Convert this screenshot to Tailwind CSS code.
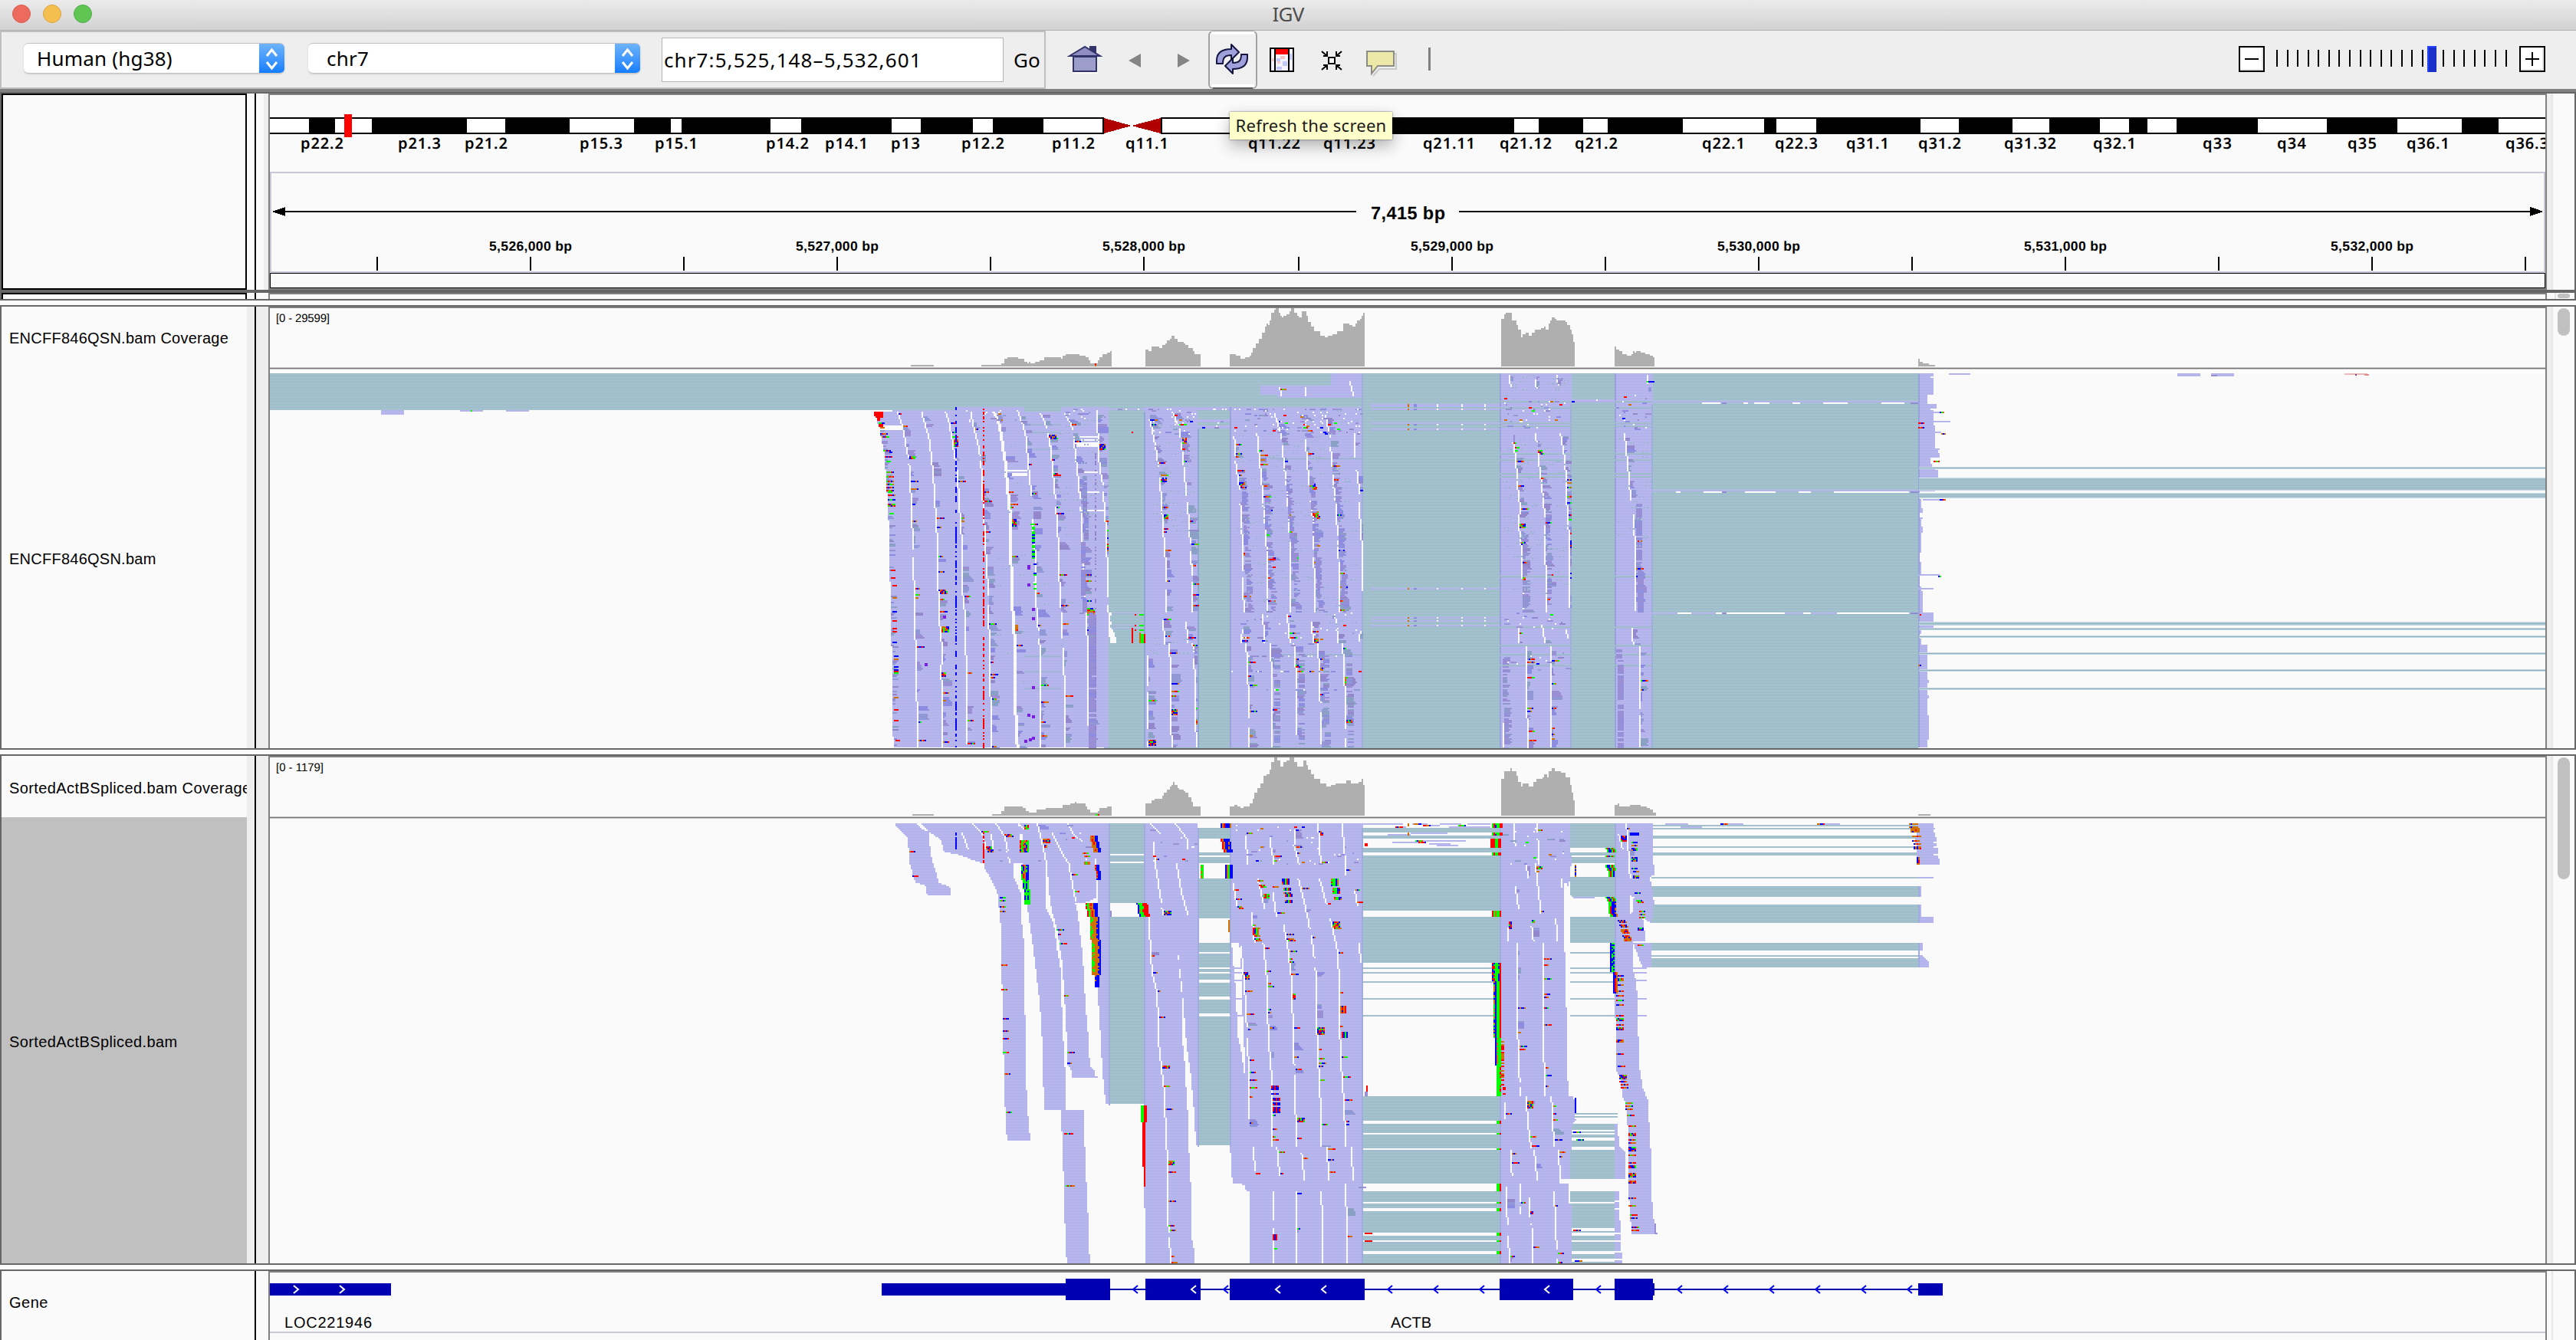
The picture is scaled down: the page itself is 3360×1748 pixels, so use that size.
<!DOCTYPE html>
<html lang="en">
<head>
<meta charset="utf-8">
<title>IGV</title>
<script src="https://cdn.jsdelivr.net/npm/@tailwindcss/browser@4"></script>
</head>
<body class="w-[3360px] h-[1748px] overflow-hidden bg-[#fafafa] flex flex-col text-black font-['Liberation_Sans',sans-serif]">

<!-- Title bar -->
<header class="h-10 shrink-0 flex items-center relative bg-linear-to-b from-[#ebebeb] to-[#d2d2d2] border-b border-[#b0b0b0]">
  <div class="flex gap-4 pl-4 -mt-1">
    <span class="size-6 rounded-full bg-[#ed6a5e] border border-[#d8574c]"></span>
    <span class="size-6 rounded-full bg-[#f5bf4f] border border-[#dba53b]"></span>
    <span class="size-6 rounded-full bg-[#61c554] border border-[#4cab40]"></span>
  </div>
  <h1 class="absolute inset-x-0 top-0 text-center text-[26px] leading-[37px] tracking-[-0.8px] text-[#4d4d4d] font-['Noto_Sans',sans-serif]">IGV</h1>
</header>

<!-- Toolbar -->
<nav class="h-[76px] shrink-0 flex bg-[#eeeeee] font-['Noto_Sans',sans-serif] text-[26px]">
  <div class="w-[1364px] h-[76px] border-2 border-[#bfbfbf] flex items-start">
    <div class="ml-[29px] mt-[14px] w-[340px] h-10 flex rounded-md overflow-hidden bg-white border-y border-[#c0c0c0] shadow-sm">
      <span class="flex-1 pl-[17px] leading-[38px] tracking-[0.2px]">Human (hg38)</span>
      <svg class="w-[33px] h-10 bg-linear-to-b from-[#6cb3fa] to-[#057aff]" viewBox="0 0 33 40" fill="none" stroke="#fff" stroke-width="3"><path d="M10 16l6.5-8 6.5 8M10 24l6.5 8 6.5-8"/></svg>
    </div>
    <div class="ml-[31px] mt-[14px] w-[433px] h-10 flex rounded-md overflow-hidden bg-white border-y border-[#c0c0c0] shadow-sm">
      <span class="flex-1 pl-6 leading-[38px] tracking-[0.2px]">chr7</span>
      <svg class="w-[33px] h-10 bg-linear-to-b from-[#6cb3fa] to-[#057aff]" viewBox="0 0 33 40" fill="none" stroke="#fff" stroke-width="3"><path d="M10 16l6.5-8 6.5 8M10 24l6.5 8 6.5-8"/></svg>
    </div>
    <div class="ml-7 mt-[7px] w-[446px] h-[58px] bg-white border border-[#b5b5b5] pl-0.5 leading-[56px] tracking-[1.1px] whitespace-nowrap">chr7:5,525,148–5,532,601</div>
    <span class="ml-[13px] leading-[72px]">Go</span>
  </div>
  <svg class="w-[520px] h-[76px]" viewBox="1364 40 520 76">
    <!-- home -->
    <g stroke="#33336b" stroke-width="2">
      <path d="M1422 66v-5h7v12" fill="#33336b"/>
      <path d="M1395 73l20-12 20 12z" fill="#8f8fc4"/>
      <rect x="1400" y="74" width="30" height="19" fill="#9d9dcc"/>
    </g>
    <path d="M1400 95h32" stroke="#fff" stroke-width="2"/>
    <path d="M1488 70v18l-16-9zM1536 70v18l16-9z" fill="#858585"/>
    <!-- refresh -->
    <rect x="1577" y="41" width="62" height="74" rx="5" fill="#f0f0f0" stroke="#a3a3a3" stroke-width="2"/>
    <path d="M1580 43h56M1580 112h56" stroke="#fdfdfd" stroke-width="4"/>
    <path d="M1582 115h52" stroke="#5a5a5a" stroke-width="2"/>
    <g fill="#a0a0dc" stroke="#15153f" stroke-width="2" stroke-linejoin="round">
      <path id="arc" d="M1587 83v-4c0-10 7-15 19-15v-6l10 10-10 10v-6c-8 0-11 3-11 11z"/>
      <use href="#arc" transform="rotate(180 1607 77)"/>
    </g>
    <!-- region of interest -->
    <rect x="1657" y="63" width="30" height="30" fill="#f3f3ff" stroke="#000" stroke-width="2"/>
    <rect x="1663" y="64" width="18" height="7" fill="#f00"/>
    <path d="M1659 76h4v4h-4zM1670 73h6v4h-6zM1666 80h4v3h-4z" fill="#f6c8c8"/>
    <path d="M1665 76h5v4h-5zM1673 80h6v6h-6zM1665 87h7v4h-7zM1682 70h3v8h-3z" fill="#c2c8fa"/>
    <path d="M1663 63v30M1681 63v30" stroke="#000" stroke-width="2"/>
    <!-- fit to window -->
    <g stroke="#000" stroke-width="2" fill="none">
      <rect x="1733" y="75" width="8" height="8" fill="#fff"/>
      <path d="M1724 67l7 6M1750 67l-7 6M1724 91l7-6M1750 91l-7-6M1731 67v6h-5M1743 67v6h5M1731 91v-6h-5M1743 91v-6h5"/>
    </g>
    <path d="M1786 70h35v20h-22l-8 9" fill="none" stroke="#c9c9c9" stroke-width="2"/>
    <path d="M1783 67h35v19h-21l-8 10v-10h-6z" fill="#ece8a8" stroke="#8c8c86" stroke-width="2"/>
    <path d="M1863 62h3v30h-3z" fill="#808080"/>
  </svg>
  <div class="flex-1"></div>
  <svg id="zoomer" class="w-[460px] h-[76px]" viewBox="2900 40 460 76" shape-rendering="crispEdges"></svg>
</nav>
<div class="h-1 shrink-0 bg-[#808080]"></div>
<div class="h-0.5 shrink-0 bg-[#666666]"></div>

<!-- Header panel -->
<section class="h-64 shrink-0 flex border-r-2 border-[#666666]">
  <div class="w-0.5 bg-[#666666]"></div>
  <div class="w-80 border-x-2 border-y-2 border-black"></div>
  <div class="w-2.5"></div><div class="w-0.5 bg-black"></div><div class="w-2.5"></div><div class="w-1.5 bg-[#eeeeee]"></div>
  <svg id="header" class="w-[2972px] h-64" viewBox="350 122 2972 256" shape-rendering="crispEdges"></svg>
  <div class="w-1.5 bg-[#eeeeee]"></div><div class="w-0.5 bg-[#e6e6e6]"></div>
</section>
<div class="h-1 shrink-0 bg-[#666666]"></div>
<section class="h-2 shrink-0 flex border-r-2 border-[#666666]">
  <div class="w-0.5 bg-[#666666]"></div>
  <div class="w-80 border-x-2 border-t-2 border-black"></div>
  <div class="w-2.5"></div><div class="w-0.5 bg-black"></div><div class="w-4"></div>
  <div class="w-[2972px] border-x-2 border-t-2 border-[#808080]"></div>
  <div class="w-3 border-r-2 border-[#e6e6e6]"></div><div class="ml-0.5 mt-px w-4 h-1.5 rounded-full bg-[#c1c1c1]"></div>
</section>
<div class="h-2.5 shrink-0 border-y-2 border-[#666666]"></div>

<!-- Alignment panel 1 -->
<section class="h-[576px] shrink-0 flex border-r-2 border-[#666666]">
  <div class="w-0.5 bg-[#666666]"></div>
  <div class="w-80 overflow-hidden pl-[10px] text-[20px] tracking-[0.25px] whitespace-nowrap">
    <div class="h-[82px] leading-[83px]">ENCFF846QSN.bam Coverage</div>
    <div class="h-[494px] leading-[495px]">ENCFF846QSN.bam</div>
  </div>
  <div class="w-2.5 bg-[#eeeeee]"></div><div class="w-0.5 bg-black"></div><div class="w-4 bg-[#eeeeee]"></div>
  <svg id="track1" class="w-[2972px] h-[576px]" viewBox="350 400 2972 576" shape-rendering="crispEdges"></svg>
  <div class="w-1.5 bg-[#eeeeee]"></div><div class="w-0.5 bg-[#e6e6e6]"></div>
  <div class="ml-1.5 mt-0.5 w-4 h-9 rounded-full bg-[#c1c1c1]"></div>
</section>
<div class="h-2.5 shrink-0 border-y-2 border-[#666666]"></div>

<!-- Alignment panel 2 -->
<section class="h-[662px] shrink-0 flex border-r-2 border-[#666666]">
  <div class="w-0.5 bg-[#666666]"></div>
  <div class="w-80 overflow-hidden text-[20px] tracking-[0.4px] whitespace-nowrap">
    <div class="h-20 leading-[84px] pl-[10px]">SortedActBSpliced.bam Coverage</div>
    <div class="h-[582px] leading-[587px] pl-[10px] bg-[#c0c0c0]">SortedActBSpliced.bam</div>
  </div>
  <div class="w-2.5 bg-[#eeeeee]"></div><div class="w-0.5 bg-black"></div><div class="w-4 bg-[#eeeeee]"></div>
  <svg id="track2" class="w-[2972px] h-[662px]" viewBox="350 986 2972 662" shape-rendering="crispEdges"></svg>
  <div class="w-1.5 bg-[#eeeeee]"></div><div class="w-0.5 bg-[#e6e6e6]"></div>
  <div class="ml-1.5 mt-0.5 w-4 h-[159px] rounded-full bg-[#c1c1c1]"></div>
</section>
<div class="h-2.5 shrink-0 border-y-2 border-[#666666]"></div>

<!-- Gene panel -->
<section class="h-[90px] shrink-0 flex border-r-2 border-[#666666]">
  <div class="w-0.5 bg-[#666666]"></div>
  <div class="w-[330px] pl-[10px] text-[20px] leading-[83px] tracking-[0.5px]">Gene</div>
  <div class="w-0.5 bg-black"></div><div class="w-4"></div>
  <svg id="genes" class="w-[2972px] h-[90px]" viewBox="350 1658 2972 90" shape-rendering="crispEdges"></svg>
  <div class="w-2 border-r-2 border-[#e6e6e6]"></div>
</section>

<!-- Tooltip -->
<div class="absolute left-[1604px] top-[146px] w-[212px] h-9 bg-[#ffffcc] text-center text-[22px] leading-[35px] tracking-[0.25px] whitespace-nowrap text-[#1a1a1a] font-['Noto_Sans',sans-serif] shadow-[0_8px_20px_rgba(0,0,0,0.3),0_0_2px_rgba(0,0,0,0.6)]">Refresh the screen</div>

<script>
const NS = 'http://www.w3.org/2000/svg';
const $ = id => document.getElementById(id);
function el(parent, name, attrs, text) {
  const e = document.createElementNS(NS, name);
  for (const k in attrs) e.setAttribute(k, attrs[k]);
  if (text) e.textContent = text;
  parent.appendChild(e);
  return e;
}
const box = (p, c, x, y, w, h) => el(p, 'rect', {x, y, width: w, height: h, fill: c});
const label = (p, s, x, y, len, size, font, weight = 400) =>
  el(p, 'text', {x, y, textLength: len, 'font-size': size, 'font-family': font, 'font-weight': weight, 'text-rendering': 'geometricPrecision'}, s);
const frame = (p, y, h) => {
  box(p, '#808080', 350, y, 2, h); box(p, '#808080', 3320, y, 2, h); box(p, '#808080', 350, y, 2972, 2);
};
let seed = 7;
const rnd = () => (seed = (seed * 1664525 + 1013904223) >>> 0) / 4294967296;
const pick = a => a[Math.floor(rnd() * a.length)];

/* zoom control */
const z = $('zoomer');
for (const x of [2920, 3286]) {
  box(z, '#000', x, 60, 34, 34); box(z, '#e4e4e4', x + 2, 62, 30, 30); box(z, '#fff', x + 2, 62, 28, 28);
  box(z, '#000', x + 8, 76, 18, 2);
}
box(z, '#000', 3302, 68, 2, 18);
for (let i = 0; i < 23; i++) box(z, '#000', Math.round(2969 + i * 13.57), 65, 2, 22);
box(z, '#2244ff', 3166, 60, 12, 34); box(z, '#1a30c8', 3168, 62, 10, 32);

/* ideogram and ruler */
const h = $('header');
frame(h, 122, 256);
box(h, '#000', 352, 153, 1088, 22); box(h, '#000', 1514, 153, 1806, 22);
const white = [[352,403],[437,485],[609,659],[743,827],[875,889],[1005,1045],[1163,1201],[1269,1295],[1361,1438],[1516,1700],[1975,2007],[2065,2097],[2195,2301],[2317,2369],[2505,2555],[2625,2673],[2739,2777],[2801,2839],[2945,3035],[3127,3211],[3259,3320]];
for (const [a, b] of white) box(h, '#fff', a, 155, b - a, 18);
el(h, 'path', {d: 'M1440 154L1476 164L1440 174zM1514 154L1476 164L1514 174z', fill: '#b00000'});
box(h, '#f00', 449, 149, 10, 30);
const bands = {392:'p22.2',519:'p21.3',606:'p21.2',756:'p15.3',854:'p15.1',999:'p14.2',1076:'p14.1',1162:'p13',1254:'p12.2',1372:'p11.2',1468:'q11.1',1628:'q11.22',1726:'q11.23',1856:'q21.11',1956:'q21.12',2054:'q21.2',2220:'q22.1',2315:'q22.3',2408:'q31.1',2502:'q31.2',2614:'q31.32',2730:'q32.1',2873:'q33',2970:'q34',3062:'q35',3139:'q36.1',3268:'q36.3'};
for (const x in bands) label(h, bands[x], x, 194, {3: 38, 5: 56, 6: 68}[bands[x].length], 20, 'Noto Sans, sans-serif', 600);
for (const r of [[352,224,2968,2],[352,224,2,132],[3318,224,2,132],[352,354,2968,2]]) box(h, '#c8c8d6', ...r);
box(h, '#000', 352, 356, 2968, 20); box(h, '#fafafa', 353, 357, 2966, 18); box(h, '#808080', 352, 376, 2968, 2);
box(h, '#000', 360, 275, 1409, 2); box(h, '#000', 1903, 275, 1409, 2);
el(h, 'path', {d: 'M354 276L372 270V282zM3318 276L3300 270V282z'});
label(h, '7,415 bp', 1788, 286, 97, 23.5, 'Liberation Sans, sans-serif', 700);
[491,691,891,1091,1291,1491,1693,1893,2093,2293,2493,2693,2893,3093,3293].forEach((x, i) => {
  box(h, '#000', x, 335, 2, 18);
  if (i % 2) label(h, '5,' + (526 + (i - 1) / 2) + ',000 bp', x - 53, 327, 108, 17.5, 'Liberation Sans, sans-serif', 700);
});
box(h, '#fafafa', 3322, 178, 2, 20);
box(h, '#808080', 3320, 122, 2, 256);

/* drawing surface for a track: coordinates are mapped through the current view */
function surface(svg) {
  const ops = [];
  let v;
  const X = x => Math.round((v.x + x / v.sx) / 2) * 2, Y = y => Math.round((v.y + y / v.sy - v.o) / 2) * 2 + v.o;
  const s = {
    limit: 9999,
    view(x, y, sx, sy, o) { v = {x, y, sx, sy, o}; },
    raw(c, x, y, w, hh) {
      w = Math.min(w, s.limit - x);
      if (w <= 0) return;
      const last = ops[ops.length - 1], d = `M${x} ${y}h${w}v${hh}h${-w}z`;
      if (last && last[0] === c) last[1].push(d); else ops.push([c, [d]]);
    },
    X, Y,
    rect(c, x0, y0, x1, y1) { s.raw(c, X(x0), Y(y0), Math.max(2, X(x1) - X(x0)), Math.max(2, Y(y1) - Y(y0))); },
    poly(c, ...n) {
      const p = [];
      for (let i = 0; i < n.length; i += 2) p.push([v.x + n[i] / v.sx, v.y + n[i + 1] / v.sy]);
      const ys = p.map(q => q[1]);
      for (let y = Math.floor((Math.min(...ys) - v.o) / 2) * 2 + v.o; y < Math.max(...ys); y += 2) {
        const c0 = [];
        p.forEach((a, i) => {
          const b = p[(i + 1) % p.length], m = y + 1.01;
          if ((a[1] > m) !== (b[1] > m)) c0.push(a[0] + (m - a[1]) / (b[1] - a[1]) * (b[0] - a[0]));
        });
        c0.sort((a, b) => a - b);
        for (let i = 0; i + 1 < c0.length; i += 2) {
          const a = Math.round(c0[i] / 2) * 2, b = Math.round(c0[i + 1] / 2) * 2;
          if (b > a) s.raw(c, a, y, b - a, 2);
        }
      }
    },
    line(n, fn) {
      for (let i = 0; i + 3 < n.length; i += 2) {
        const y0 = v.y + n[i + 1] / v.sy, y1 = v.y + n[i + 3] / v.sy, x0 = v.x + n[i] / v.sx, x1 = v.x + n[i + 2] / v.sx;
        for (let y = Math.round((y0 - v.o) / 2) * 2 + v.o; y < y1; y += 2)
          fn(Math.round((x0 + (y - y0) / (y1 - y0) * (x1 - x0)) / 2) * 2, y);
      }
    },
    steps(c, base, ...n) {
      const b = Math.round(v.y + base / v.sy);
      for (let i = 0; i + 2 < n.length; i += 2) {
        const a = X(n[i]), e = X(n[i + 2]), t = Math.round((v.y + n[i + 1] / v.sy) / 2) * 2;
        if (e > a) s.raw(c, a, t, e - a, b - t);
      }
    },
    flush() { for (const [c, d] of ops) el(svg, 'path', {d: d.join(''), fill: c}); ops.length = 0; }
  };
  return s;
}
function patterns(svg, id, y0) {
  const defs = el(svg, 'defs', {});
  for (const [n, a, b] of [['read', '#b0b0e9', '#babaf0'], ['skip', '#98b7c5', '#abc8d4']]) {
    const p = el(defs, 'pattern', {id: n + id, width: 8, height: 2, patternUnits: 'userSpaceOnUse', y: y0});
    box(p, a, 0, 0, 8, 1); box(p, b, 0, 1, 8, 1);
  }
}
const BASES = ['#ff0000', '#0000ff', '#00ff00', '#d17105', '#d17105', '#0000ff', '#ff0000'];
const DIM = ['#8c8ce0', '#9a8fd4', '#9098d6', '#9488cc', '#8aa0c4'];
const GRAY = '#afafaf';

/* white gap between neighbouring reads with mismatch clusters trailing it */
function gap(s, n, o = {}) {
  const {w = 2, mis = 0.16, dim = 0.4, solid = 0.85, grow = 0} = o;
  let run = 0, cols = 0, open = true, count = 0, dimRun = 0, dw = 0, dc, total = 0;
  s.line(n, (x, y) => {
    total++;
    if (count-- <= 0) { open = rnd() < solid; count = open ? 4 + rnd() * 16 : 1 + rnd() * 4; }
    if (open) s.raw('#fafafa', x, y, w, 2);
    if (dimRun-- > 0) { if (rnd() < .4) dw = Math.max(2, dw + pick([-2, 2])); s.raw(dc, x + w, y, dw, 2); if (rnd() < .3) dc = pick(DIM); }
    else if (rnd() < dim * .35) { dimRun = 1 + rnd() * (5 + grow * total / 12); dw = 4 + Math.floor(rnd() * 4) * 2; dc = pick(DIM); }
    if (run-- > 0) { for (let k = 0; k < cols; k++) s.raw(pick(BASES), x + w + k * 2, y, 2, 2); }
    else if (rnd() < mis * .4) { run = rnd() < .85 ? 1 : 1 + rnd() * 4; cols = 2 + Math.floor(rnd() * 4); }
  });
}
function dots(s, x0, y0, x1, y1, n) {
  for (let i = 0; i < n; i++) {
    const x = s.X(x0 + rnd() * (x1 - x0)), y = s.Y(y0 + rnd() * (y1 - y0)), r = rnd();
    if (r < .45) s.raw('#fafafa', x, y, 2, 2);
    else if (r < .55) s.raw(pick(BASES), x, y, 4, 2);
    else s.raw(pick(DIM), x, y, 2 + Math.floor(rnd() * 4) * 2, 2);
  }
}
function specks(s, x0, y0, x1, y1, n) {
  for (let i = 0; i < n; i++) {
    const x = s.X(x0 + rnd() * (x1 - x0)), y = s.Y(y0 + rnd() * (y1 - y0));
    s.raw('#9fb6d2', x, y, 2, 2); s.raw('#9fb6d2', x + 4, y, 2, 2);
  }
}

/* ---------- track 1 ---------- */
{
  const svg = $('track1'), s = surface(svg), READ = 'url(#read1)', SKIP = 'url(#skip1)';
  patterns(svg, 1, 487);
  frame(svg, 400, 576);
  const L = () => s.view(1120, 380, 2.24, 2.529, 1), Rt = () => s.view(1820, 380, 2.063, 2.529, 1);
  L();
  s.steps(GRAY, 248, 152,243,220,0); s.steps(GRAY, 248, 358,243,418,237,425,225,435,217,465,222,485,232,493,238,498,233,503,238,515,233,527,228,543,218,590,222,597,210,605,207,645,212,665,218,670,228,677,238,700,228,705,218,712,207,727,202,735,197,739,0);
  s.steps(GRAY, 248, 838,193,848,196,857,183,880,187,887,177,895,170,900,162,910,158,914,147,923,157,932,165,948,170,955,177,964,187,975,197,983,207,999,0);
  s.steps(GRAY, 248, 1084,207,1100,212,1117,222,1127,217,1144,212,1148,202,1153,187,1161,170,1170,155,1178,138,1187,115,1192,107,1197,110,1201,97,1205,70,1213,60,1219,57,1228,70,1232,82,1237,87,1243,80,1250,75,1258,67,1263,57,1271,70,1280,80,1287,85,1296,66,1308,80,1313,100,1321,117,1330,132,1340,134,1347,147,1362,152,1370,145,1383,140,1398,130,1410,130,1416,107,1426,107,1433,112,1444,116,1450,107,1456,95,1463,90,1468,80,1473,72,1478,0);
  Rt();
  s.steps(GRAY, 248, 285,92,293,76,298,71,314,95,325,110,330,127,337,152,343,142,352,137,360,147,367,137,376,127,393,120,399,116,404,126,413,107,417,97,422,86,428,92,433,97,458,102,462,112,470,127,475,142,479,167,483,0);
  s.steps(GRAY, 248, 590,182,594,192,603,197,611,207,623,212,635,207,640,198,644,203,648,197,660,202,673,207,685,212,693,217,697,0);
  s.steps(GRAY, 248, 1408,223,1412,234,1420,238,1436,243,1452,0);
  s.raw('#ff0000', 1428, 474, 2, 2); s.raw('#d17105', 1428, 476, 2, 2);
  s.raw('#c4c4c4', 352, 479, 2968, 3); s.raw('#757575', 352, 480, 2968, 1);
  s.raw('#fdfdfd', 352, 482, 2968, 5);

  s.raw(SKIP, 352, 487, 1100, 48); s.raw(SKIP, 1440, 487, 1062, 489);
  s.raw(READ, 497, 535, 30, 6); s.raw(READ, 600, 535, 30, 2); s.raw(READ, 660, 535, 30, 2);
  s.raw('#00ff00', 614, 535, 2, 2);
  L();
  s.poly(READ, 45,395,283,393,283,383,730,383,732,1507,102,1507,98,1380,97,1220,94,1000,90,920,88,770,85,700,75,530,60,450);
  s.rect(SKIP, 485, 383, 592, 398);
  s.rect(READ, 835, 383, 992, 1507); s.rect(READ, 1085, 383, 1472, 1507);
  s.rect(READ, 992, 383, 1085, 392); s.rect(READ, 730, 385, 835, 390);
  s.rect(READ, 1378, 271, 1468, 352); s.rect(READ, 1175, 312, 1380, 343); s.rect(READ, 1225, 340, 1468, 352);
  s.rect(READ, 992, 420, 1085, 432); s.rect(READ, 992, 443, 1085, 453);
  s.rect('#8fa8cf', 833, 395, 836, 1507); s.rect('#8fa8cf', 990, 455, 993, 1507); s.rect('#9aa2dc', 1084, 383, 1087, 1507); s.rect('#9fb0d8', 1470, 271, 1473, 1507);
  for (const y of [435,465,516,1199,1250,1310]) s.rect('#9fb6d2', 485, y, 592, y + 3);
  for (const y of [551,1195]) s.rect('#9fb6d2', 1200, y, 1470, y + 3);
  for (const r of [[60,444,127,458],[625,478,697,484],[632,488,697,492],[628,500,697,513],[425,590,494,593],[430,597,494,610],[636,592,698,596],[640,661,705,666],[648,722,716,727]]) s.rect('#fafafa', ...r);
  s.poly('#fafafa', 730,1060,738,1062,734,1085,742,1100,734,1104,742,1115,748,1130,755,1160,733,1160);
  const g = [
    [112,395,125,440,135,500,145,560,150,660,154,770,158,850,158,940,163,1000,163,1120,165,1225,167,1300,169,1400,171,1507],
    [181,395,190,430,203,480,212,560,218,640,224,760,229,840,229,970,235,1020,235,1100,241,1170,239,1260,243,1380,244,1507],
    [252,395,262,430,270,480,280,550,287,610,293,720,298,800,300,920,303,1020,310,1070,311,1180,314,1320,314,1490],
    [325,395,335,450,346,500,355,560,360,660,362,740,368,800,370,880,375,960,376,1050,380,1150,381,1300,387,1400,387,1507],
    [390,395,405,430,414,490,424,560,430,640,437,720,438,790,441,900,445,960,446,1080,452,1150,454,1380,460,1507],
    [462,390,478,440,487,480,492,550,498,620,504,680,507,780,514,860,513,960,519,1070,527,1170,529,1280,529,1500],
    [530,400,548,450,558,510,566,600,572,680,578,770,583,860,584,940,588,1030,592,1110,596,1200,600,1320,602,1500],
    [600,400,620,440,628,500,638,600,645,680,650,770,653,880,656,980,663,1080,668,1200,666,1350,673,1500],
    [695,390,697,480,702,580,712,640,716,720,722,800,724,900,728,1055]];
  s.line([50,400,60,450,75,530,85,700,88,770,90,920,94,1000,97,1220,98,1380,102,1500], (x, y) => {
    if (rnd() < .3 && y < 660) for (let k = 0; k < 5; k++) s.raw(pick(BASES), x + k * 2, y, 2, 2);
    else if (rnd() < .1) s.raw(pick(BASES), x + 2, y, 6, 2);
    else if (rnd() < .35) s.raw(pick(DIM), x, y, 4 + Math.floor(rnd() * 3) * 2, 2);
  });
  s.poly('#ff0000', 45,395,72,395,72,414,62,418,64,425,56,425,52,416,45,414);
  s.poly('#00ff00', 56,430,68,430,68,436,58,436); s.poly('#ff0000', 58,436,72,436,72,446,60,446);
  g.forEach((n, i) => { s.limit = i === 8 ? 1446 : 9999; gap(s, n, i < 3 ? {dim: .22, mis: .12, solid: .97} : i === 4 ? {w: 4, dim: .45, mis: .1, solid: .97} : {dim: i > 6 ? .8 : .5, mis: .14}); });
  s.limit = 9999;
  s.line([660,820,661,1060,680,1061,680,1507], (x, y) => { if (rnd() < .9) s.raw(pick(['#9a8fd4','#9a8fd4','#9590d4','#8c8ce0']), x - 4, y, y > 800 ? 10 : 6, 2); });
  s.line([648,610,655,820], (x, y) => { if (rnd() < .8) s.raw(pick(DIM), x + 2, y, 6, 2); });
  for (const [x, c, p, y0] of [[280,'#0000ff',.55,383],[365,'#ff0000',.55,388],[692,'#9484cf',.4,520]])
    s.line([x, y0, x, 1507], (a, y) => { if (rnd() < p) s.raw(c, a, y, 2, 2); });
  s.line([508,765,512,860,516,980], (x, y) => { if (rnd() < .6) s.raw(pick(['#00ff00', '#00ff00', '#0000ff']), x - 2, y, 4, 2); });
  for (const [x, y] of [[497,910],[497,970],[510,1048],[510,1080],[197,1230],[250,1073],[510,1305],[498,1397],[510,1405],[500,1480],[508,1475],[490,1485]]) s.rect('#7a1fe0', x - 4, y - 5, x + 5, y + 6);
  const ex = [
    [843,400,855,450,868,530,875,590,882,680,888,790,893,860,897,940,898,1058],
    [915,395,935,450,945,540,953,640,960,720,965,800,970,900,970,1058],
    [1095,480,1100,570,1112,660,1115,760,1121,850,1121,1000,1125,1058],
    [1162,470,1168,540,1175,620,1180,700,1186,780,1192,880,1193,1058],
    [1212,400,1232,470,1240,560,1250,660,1253,760,1261,840,1261,1058],
    [1285,400,1303,480,1308,560,1318,680,1328,780,1328,900,1332,1058],
    [1360,400,1375,480,1382,600,1392,700,1396,780,1400,880,1404,1058],
    [1445,470,1450,560,1460,650,1462,740,1468,830,1470,920,1472,1000],
    [1228,315,1234,343],[1302,315,1304,343],[1430,275,1436,310,1445,345]];
  const lower = [[885,1065,893,1162],[955,1090,960,1160],[1125,1085,1113,1160],[1178,1065,1185,1160],[1250,1065,1258,1160],[1320,1065,1326,1160],[1390,1065,1400,1160],[1463,1120,1462,1155],
    [905,1163,910,1250,912,1500],[974,1163,981,1280,984,1500],[1130,1163,1136,1300,1138,1500],[1200,1163,1207,1300,1205,1500],[1270,1163,1278,1300,1278,1460],[1340,1163,1345,1300,1350,1500],[1412,1163,1418,1300,1418,1500],[840,1180,843,1500]];
  ex.forEach((n, i) => {
    s.limit = i < 2 ? 1564 : 1778;
    gap(s, n, {dim: i > 6 ? .15 : .6, mis: i === 7 ? .12 : .2, solid: .72});
    if (i > 1 && i < 7) s.line([n[4] + 8, 610, n[6] + 10, 800, n[10] + 16, 1055], (x, y) => { if (rnd() < .7) s.raw(pick(['#9a8fd4', '#9490d8', '#8c8ce0']), x, y, 4 + Math.floor(rnd() * 3) * 2, 2); });
  });
  lower.forEach((n, i) => {
    s.limit = n[0] < 990 ? 1562 : 1778;
    gap(s, n, {dim: .55, mis: .18, solid: .75});
    if (i > 10 && i < 15) s.line([n[4] + 8, 1190, n[4] + 10, 1500], (x, y) => { if (rnd() < .55) s.raw(pick(DIM), x, y, 8, 2); });
  });
  s.limit = 9999;
  dots(s, 840, 385, 985, 470, 32); dots(s, 1090, 385, 1465, 470, 85); dots(s, 300, 385, 480, 430, 14); dots(s, 600, 385, 720, 430, 14); dots(s, 1095, 1055, 1460, 1170, 40);
  dots(s, 740, 386, 1080, 388, 12); dots(s, 995, 424, 1080, 450, 5);
  for (let i = 0; i < 4; i++) for (const y of [388, 1199, 1250, 1310]) dots(s, 1090, y, 1460, y + 1, 3);
  specks(s, 580, 420, 700, 800, 30); specks(s, 850, 420, 980, 800, 55); specks(s, 1100, 380, 1455, 1100, 110); specks(s, 850, 1100, 980, 1200, 10); specks(s, 400, 500, 620, 1300, 25);
  for (const y of [1062, 1100, 1108]) s.rect('#a9b8dc', 738, y, 835, y + 3);
  s.rect('#ff0000', 797, 1110, 802, 1162); s.rect('#d17105', 820, 1125, 826, 1160); s.rect('#00ff00', 826, 1130, 832, 1160); s.rect('#ff0000', 832, 1130, 834, 1160);
  for (const y of [1064, 1100, 1115]) { s.rect('#ff0000', 806, y, 812, y + 2); s.rect('#00ff00', 820, y, 832, y + 2); }
  s.rect('#ff0000', 797, 464, 801, 468);
  s.rect('#ff0000', 570, 602, 590, 611);

  Rt();
  s.rect(READ, 282, 271, 473, 1507); s.rect(READ, 590, 271, 692, 1507);
  s.rect('#9aa2dc', 281, 271, 284, 1507); s.rect('#9aa2dc', 589, 271, 592, 1507); s.rect('#9fb0d8', 471, 370, 474, 1507); s.rect('#9fb0d8', 689, 370, 692, 1507);
  s.rect(READ, 473, 358, 590, 368); s.rect('#ffffff', 540, 359, 545, 364);
  for (const y of [374,379,389,436,456,982,1078,1088,1103]) {
    s.rect(READ, -68, y - 2, 282, y + 3);
    for (const x of [50, 110, 176, 240]) s.rect('#fafafa', x, y - 1, x + 4, y + 2);
    s.rect('#d17105', 33, y - 1, 37, y + 2); s.rect('#8c8ce0', 50, y - 1, 58, y + 1);
  }
  for (const y of [366, 659, 1063]) {
    s.rect(READ, 690, y - 2, 1430, y + 3);
    for (const [a, b] of y === 366 ? [[825,873],[935,950],[965,1006],[1070,1088],[1150,1218],[1308,1370]] : y === 659 ? [[757,766],[830,878],[940,1022],[1085,1118],[1180,1384]] : [[758,798],[862,1046],[1097,1120],[1190,1384]]) s.rect('#ffffff', a, y - 1, b, y + 2);
    s.rect('#8c8cd0', 1386, y - 1, 1406, y + 1); s.rect('#8c8cd0', 880, y - 1, 890, y + 1);
  }
  for (const y of [362,383,432,443,532,552,597,612,936,1107,1168,1194,1230]) { s.rect('#9fbccb', 282, y, 474, y + 3); s.rect('#9fbccb', 590, y, 690, y + 3); }
  s.limit = 2050;
  [
    [306,275,308,315],[375,275,378,320],[433,275,436,310],
    [312,470,322,550,327,640,333,700,331,780,338,850,338,960,343,1000,343,1055],[331,1110,331,1160],[350,1170,354,1507],
    [375,470,380,510,388,600,398,700,400,860,405,950,406,1055],[396,1110,400,1160],[416,1170,418,1500],
    [443,470,448,510,455,560,460,700,465,800,467,960,467,1040],[458,1115,462,1145],[290,1425,290,1500]].forEach(n => gap(s, n, {dim: .6, mis: .24, solid: .78}));
  s.limit = 2154;
  [[675,275,678,330],[615,470,625,590,632,690],[640,700,643,900,645,1050],[635,1110,638,1162],[655,1170,658,1500],[688,470,690,610]].forEach(n => gap(s, n, {dim: .6, mis: .1, solid: .75}));
  s.limit = 9999;
  s.line([346,800,348,1055], (x, y) => { if (rnd() < .75) s.raw(pick(['#9a8fd4', '#9490d8', '#9098cf']), x - 2, y, 6 + Math.floor(rnd() * 3) * 2, 2); });
  s.line([294,1210,296,1507], (x, y) => { if (rnd() < .75) s.raw(pick(['#9a8fd4', '#9490d8', '#9098cf']), x - 2, y, 6 + Math.floor(rnd() * 3) * 2, 2); });
  s.line([405,720,410,1055], (x, y) => { if (rnd() < .6) s.raw(pick(DIM), x, y, 6, 2); });
  s.line([642,700,648,1055], (x, y) => { if (rnd() < .85) s.raw(pick(['#9a8fd4', '#8f8fe0', '#9490d8']), x + 2, y, 8, 2); });
  s.line([596,1180,598,1507], (x, y) => { if (rnd() < .85) s.raw(pick(['#9a8fd4', '#9490d8']), x, y, 8, 2); });
  dots(s, 290, 350, 462, 460, 45); dots(s, 595, 340, 682, 460, 25); dots(s, 290, 1060, 460, 1110, 20); dots(s, 290, 1180, 460, 1250, 15);
  specks(s, 288, 271, 460, 360, 18); specks(s, 288, 480, 460, 1000, 75); specks(s, 595, 480, 680, 850, 25);
  /* last exon fringe */
  const fr = (y0, y1, a, b) => { for (let y = s.Y(y0); y < s.Y(y1); y += 2) { if (!fr.k || rnd() < .25) fr.k = a + rnd() * (b - a); const x = s.X(fr.k); s.raw(READ, 2502, y, x - 2502, 2); } fr.k = 0; };
  fr(271,340,1440,1460); fr(340,370,1425,1452); fr(370,615,1436,1466); fr(655,662,1450,1460); fr(685,1060,1413,1421); fr(1060,1108,1430,1456); fr(1108,1165,1412,1416); fr(1165,1507,1430,1436);
  s.rect('#9aa2dc', 1407, 271, 1410, 1507);
  s.rect(READ, 1490, 272, 1549, 277); s.rect(READ, 1430, 429, 1493, 434); s.rect(READ, 1408, 935, 1466, 940); s.rect(READ, 1420, 663, 1480, 667); s.rect(READ, 1420, 684, 1480, 688); s.rect(READ, 1440, 395, 1470, 399); s.rect(READ, 1440, 465, 1470, 469); s.rect(READ, 1408, 980, 1450, 985);
  for (const [x, y, cs] of [[1408,432,'rrbr'],[1408,447,'rorb'],[1466,398,'bgo'],[1470,467,'obo'],[1448,558,'rogr'],[1466,664,'bbrb'],[1466,685,'bbro'],[1462,938,'bg'],[1408,1231,'ob']])
    [...cs].forEach((c, k) => s.raw({r: '#ff0000', b: '#0000ff', g: '#00ff00', o: '#d17105'}[c], s.X(x) + k * 2, s.Y(y), 2, 2));
  s.rect('#ff0000', 1410, 1067, 1415, 1071); s.rect('#0000ff', 474, 364, 482, 368); s.rect('#0000ff', 680, 298, 696, 303); s.rect('#00ff00', 676, 298, 682, 303);
  const teal = (y, hh) => { s.raw('#c3d8e0', 2503, y, 817, hh); if (hh > 4) s.raw(SKIP, 2503, y + 1, 817, hh - 2); else s.raw('#8fb0c0', 2503, y + 1, 817, 1); };
  teal(609, 3); teal(623, 17); teal(643, 7); teal(811, 5); teal(819, 3); teal(829, 3); teal(851, 3); teal(873, 3); teal(897, 3);
  for (const [x, y, w, c] of [[2840,487,30,READ],[2884,487,30,READ],[3058,487,30,'#f0b8b8']]) s.raw(c, x, y, w, c === READ ? 4 : 2);
  s.raw('#9090d0', 2884, 489, 8, 2); s.raw('#e09090', 3084, 488, 6, 2); s.raw('#804090', 3072, 488, 2, 2);
  s.flush();
  box(svg, '#808080', 3320, 400, 2, 576);
  label(svg, '[0 - 29599]', 360, 420, 70, 15, 'Liberation Sans, sans-serif');
}

/* ---------- track 2 ---------- */
{
  const svg = $('track2'), s = surface(svg), READ = 'url(#read2)', SKIP = 'url(#skip2)', BG = '#fafafa';
  patterns(svg, 2, 1074);
  frame(svg, 986, 662);
  const L = () => s.view(1120, 980, 2.24, 2.0417, 0), Rt = () => s.view(1820, 980, 2.063, 2.0417, 0);
  L();
  s.steps(GRAY, 171, 157,167,220,0);
  s.steps(GRAY, 171, 390,167,418,160,427,148,435,147,478,152,490,160,498,163,520,157,532,155,547,150,590,152,597,142,620,139,630,136,636,140,663,147,668,155,678,162,698,160,703,152,710,150,725,147,739,0);
  s.steps(GRAY, 171, 838,140,850,137,857,130,865,125,885,118,893,110,900,102,908,95,912,90,918,83,924,90,930,100,938,102,948,107,955,112,964,122,972,135,978,147,999,0);
  s.steps(GRAY, 171, 1084,147,1097,144,1105,148,1117,153,1125,148,1142,140,1150,125,1158,110,1166,100,1175,85,1183,67,1190,60,1201,50,1205,30,1213,17,1222,25,1232,40,1240,28,1250,25,1259,17,1272,30,1280,40,1290,40,1298,25,1308,38,1313,48,1321,62,1330,73,1347,85,1365,95,1380,90,1395,87,1412,85,1425,78,1440,85,1460,80,1470,75,1476,90,1478,0);
  Rt();
  s.steps(GRAY, 171, 285,72,293,53,308,46,314,52,325,65,330,82,338,95,343,87,352,85,360,93,370,82,380,73,395,68,402,62,407,70,413,55,422,46,430,53,445,58,460,70,470,90,475,110,480,130,483,0);
  s.steps(GRAY, 171, 590,142,598,140,604,145,630,143,660,147,675,150,685,157,693,163,700,0);
  s.steps(GRAY, 171, 1408,167,1440,0);
  s.raw('#00ff00', 1429, 1062, 3, 2); s.raw('#ff0000', 1432, 1062, 2, 2);
  s.raw('#c4c4c4', 352, 1065, 2968, 3); s.raw('#757575', 352, 1066, 2968, 1);

  /* skipped regions */
  L();
  for (const [a, b] of [[190,272],[277,293],[300,403],[440,941]]) s.rect(SKIP, 726, a, 838, b);
  for (const [a, b] of [[203,232],[268,276],[281,300],[337,447],[509,534],[541,574],[580,586],[592,609],[616,655],[662,700],[706,1050]]) s.rect(SKIP, 988, a, 1087, b);
  const singles = [577, 589, 612, 658, 703];
  Rt();
  for (const [a, b] of [[203,218],[224,232],[256,268],[276,423],[440,562],[918,983],[991,1017],[1021,1057],[1061,1150],[1172,1199],[1204,1217],[1223,1281],[1289,1301],[1305,1330],[1338,1364]]) s.rect(SKIP, -92, a, 283, b);
  for (const [a, b] of [[190,256],[268,276],[281,300],[335,387],[440,509],[534,540],[991,1009],[1020,1031],[1037,1052],[1061,1140],[1172,1199],[1204,1268],[1289,1301],[1305,1330],[1338,1353],[1358,1364]]) s.rect(SKIP, 470, a, 592, b);
  for (const y of [965, 972, 1014, 1279]) s.rect(SKIP, 473, y - 2, 597, y + 2);
  for (const y of singles) { s.rect('#a3c0cc', -92, y - 1, 282, y + 1); s.rect('#a3c0cc', 470, y - 1, 592, y + 1); s.rect(READ, 610, y - 2, 676, y + 2); }
  for (const y of [197, 205, 227, 229, 254, 270, 274, 336, 544]) s.rect('#a3c0cc', 690, y - 1, 1408, y + 1);
  for (const [a, b] of [[358,387],[407,456],[509,532],[551,574]]) s.rect(SKIP, 688, a, 1410, b);

  /* reads, left part */
  L();
  s.poly(READ, 102,190,725,190,725,203,703,215,690,300,450,300,360,298,290,275,250,268,240,235,205,215,210,270,218,300,235,350,267,362,267,382,200,382,195,358,165,350,150,300,143,230,115,205);
  s.poly(READ, 365,296,450,296,455,340,473,375,473,430,482,500,484,680,488,720,488,860,493,940,497,1005,504,1036,435,1036,430,1005,425,870,420,680,416,470,405,375,385,340,368,310);
  s.poly(READ, 480,298,545,298,548,420,570,460,580,530,590,580,595,720,603,850,607,954,541,954,538,800,530,680,515,560,500,460,490,400);
  s.poly(READ, 545,298,612,298,622,350,632,403,640,430,655,550,663,680,673,780,675,840,688,850,690,866,701,868,622,868,620,845,610,838,608,760,600,650,590,560,575,470,560,400);
  s.poly(READ, 612,298,692,298,697,390,662,403,632,403,622,350);
  s.poly(READ, 700,190,730,190,730,941,722,941,712,850,703,700,697,628,697,403,694,300);
  s.poly(READ, 590,954,657,954,661,1060,667,1180,672,1270,675,1364,608,1364,603,1270,600,1180,596,1050);
  s.poly(READ, 837,190,990,190,990,440,990,1050,985,1050,982,980,970,860,958,780,945,630,930,510,916,440,930,510,938,600,943,640,946,770,955,850,958,940,962,960,965,1060,970,1150,970,1280,980,1330,980,1364,840,1364,838,1250,832,1165,832,940,837,900);
  s.poly(READ, 1085,190,1472,190,1472,1364,1141,1364,1141,1172,1128,1168,1128,1155,1092,1150,1085,1050);
  s.poly(BG, 1090,512,1112,510,1120,600,1122,700,1130,850,1130,880,1118,800,1108,760,1100,620);
  for (const [x, a, b] of [[728,190,941],[835,190,941],[989,205,1050],[1085,203,1050],[1471,203,1364]]) s.line([x, a, x, b], (q, y) => s.raw('#a0acdc', q, y, 2, 2));
  for (const y of singles) s.rect(READ, 1085, y - 2, 1125, y + 2);

  const quiet = {dim: .03, mis: .07, solid: .92}, busy = {dim: .05, mis: .2, solid: .72};
  s.poly(BG, 160,188,176,188,206,215,190,210);
  [[268,192,300,215,318,260],[330,192,360,220,372,268],[400,192,425,225,440,298],[465,192,480,205],[385,220,395,280],[535,192,520,192,536,250,547,298],[547,192,560,210,605,290,610,298],[610,192,625,220,655,240]].forEach(n => gap(s, n, {...quiet, solid: .7}));
  gap(s, [547,298,552,400,575,470,590,560,597,650,603,760,607,840], {...quiet, mis: .16});
  gap(s, [612,298,622,350,632,400], quiet);
  gap(s, [845,440,855,590,870,640,875,780,890,900,893,960,898,1050,901,1150,901,1240,908,1330,910,1364], {...quiet, mis: .2});
  gap(s, [850,192,880,220], quiet); gap(s, [923,192,945,215,958,235,960,260], quiet); gap(s, [858,240,865,300,875,360,888,435], {...quiet, mis: .2}); gap(s, [927,300,940,370,960,435], quiet);
  s.line([410,375,414,470,418,680,424,870,432,1030], (x, y) => { if (rnd() < .08) for (let k = 0; k < 4; k++) s.raw(pick(BASES), x + k * 2, y, 2, 2); });
  s.line([598,960,606,1210], (x, y) => { if (rnd() < .05) for (let k = 0; k < 6; k++) s.raw(pick(BASES), x + k * 2, y, 2, 2); });
  s.line([145,235,160,340], (x, y) => { if (rnd() < .13) for (let k = 0; k < 4; k++) s.raw(pick(BASES), x + k * 2, y, 2, 2); });
  s.limit = 1778;
  [[1125,192,1135,300],[1205,192,1200,240,1212,300],[1275,192,1270,250,1285,300],[1340,192,1348,300],[1410,192,1415,240,1422,330],
   [1092,350,1105,420],[1165,340,1185,420],[1145,430,1155,510],[1205,350,1218,440],[1235,440,1250,510],[1283,340,1310,440,1325,520],[1345,340,1375,440,1395,520],[1445,350,1455,410],
   [1115,520,1125,620,1135,780,1140,1000],[1150,1052,1158,1130],[1180,510,1190,600,1195,760,1203,850,1207,1050],[1220,1052,1228,1130],[1208,1172,1208,1364],
   [1250,510,1262,600,1268,760,1272,900,1278,1050],[1290,1050,1300,1140],[1277,1172,1277,1364],[1325,520,1335,600,1338,800,1345,880,1350,1050],[1365,1055,1373,1140],[1350,1172,1354,1364],
   [1395,520,1402,600,1405,800,1413,900,1422,1050],[1438,1052,1442,1140],[1421,1150,1426,1364],[1460,510,1465,560]].forEach((n, i) => gap(s, n, n[1] > 1100 ? {...quiet, mis: .06, solid: .95} : i < 13 ? busy : {...busy, solid: .88}));
  s.limit = 9999;
  dots(s, 1095, 195, 1460, 300, 40); dots(s, 400, 195, 690, 298, 16); dots(s, 840, 195, 980, 300, 12);
  /* dense mismatch columns */
  const col = (x0, y0, x1, y1, ...cs) => s.line([x0, y0, x1, y1], (x, y) => cs.forEach((c, k) => s.raw(typeof c === 'string' ? c : pick(c), x + k * 2, y, 2, 2)));
  const mixed = (p, x0, y0, x1, y1, ...cs) => s.line([x0, y0, x1, y1], (x, y) => { if (rnd() < p) cs.forEach((c, k) => s.raw(typeof c === 'string' ? c : pick(c), x + k * 2, y, 2, 2)); });
  const r = '#ff0000', b = '#0000ff', gr = '#00ff00', o = '#d17105', any = [r, b, gr, o];
  s.rect(BG, 470, 222, 480, 236);
  col(470,236,470,266, any, gr, any, [b,o], any, gr); col(475,302,476,340, [gr,b], any, o, [gr,b], b); col(479,344,486,405, [b,gr], gr, [gr,b], gr); col(483,195,484,207, any, gr, any);
  col(676,226,686,266, o, [o,r], o, b, b); s.rect(BG, 695, 340, 698, 403); col(691,303,694,340, [o,r,b], b, b);
  col(662,403,670,440, [r,gr], gr, o, [o,r], o, b, b, b); s.rect(READ, 697, 403, 701, 628); col(676,440,683,595, [o,gr], [gr,o], o, o, [b,o], b); col(688,595,690,628, [o,b], b, b);
  mixed(.6, 655,268,657,278, o, r, o, gr); mixed(.6, 658,293,658,300, o, gr, o, o);
  col(812,403,820,440, b, [gr,o], gr, [gr,r], r, r, r); col(824,943,824,988, gr, gr, r, r); col(829,988,829,1105, r, r); col(833,1105,834,1158, r);
  col(1056,192,1056,203, b, o, r, b, b, b, o); col(1058,233,1066,268, r, o, b, b, [b,o], b); col(1072,303,1072,337, b, o, gr, b, b); s.rect(o, 1079, 448, 1083, 480); col(999,303,999,337, [gr,o], gr);
  mixed(.9, 280,218,280,265, b); mixed(.9, 365,212,365,300, r);
  mixed(.7, 1205,880,1210,962, [b,r], b, r, b, [b,r]); mixed(.8, 1210,1278,1210,1302, r, b, r); mixed(.55, 1166,342,1185,390, any, r, gr, any); mixed(.6, 1236,340,1248,405, any, b, gr, r, b); mixed(.6, 1378,340,1392,400, any, gr, gr, b, any); mixed(.6, 1152,468,1154,492, r, any, gr, o); mixed(.9, 1408,676,1408,696, o, any, o, r); mixed(.9, 1410,747,1412,763, r, b, gr, b);

  /* reads, right part */
  Rt();
  s.poly(READ, 282,190,470,190,473,300,465,380,452,440,455,500,460,680,465,918,480,920,485,982,473,1000,473,1060,445,1140,465,1150,465,1200,473,1210,473,1364,282,1364);
  s.poly(BG, 455,350,463,350,468,383,478,387,478,440,455,440); s.poly(BG, 437,1060,446,1140,470,1142,470,1151,443,1151);
  s.poly(SKIP, 470,1061,592,1061,592,1140,470,1140);
  s.poly(READ, 443,1061,470,1061,470,1140,446,1140);
  s.poly(READ, 590,190,692,190,696,330,683,336,690,358,696,400,690,456,680,455,665,440,675,508,638,508,638,575,645,600,650,640,653,740,658,850,667,900,680,930,683,990,687,1060,690,1190,695,1240,698,1288,637,1288,632,1240,627,1160,625,990,620,940,612,920,605,870,595,850,593,740,590,640);
  s.poly(READ, 640,510,690,510,690,574,665,574,655,550);
  s.poly(READ, 590,991,598,991,602,1050,617,1065,620,1140,590,1140); s.poly(READ, 590,1172,601,1172,602,1200,606,1280,610,1364,590,1364);
  for (const [x, a, c] of [[281,203,1364],[589,190,1364]]) s.line([x, a, x, c], (q, y) => { if (y < 1300 || x < 300) s.raw('#a0acdc', q, y, 2, 2); });
  for (const y of [1200, 1219, 1285, 1303, 1334, 1355]) s.rect(BG, 588, y - 2, 612, y + 2);
  s.poly(BG, 632,385,642,388,636,440,630,420);
  s.poly(READ, 1405,190,1448,190,1455,230,1460,268,1465,302,1405,302,1400,240);
  for (const y of [207, 212, 240, 252, 275]) s.rect(BG, 1450, y, 1462, y + 3);
  s.rect(READ, 1408, 334, 1447, 338); s.rect(READ, 1408, 358, 1415, 387); s.rect(READ, 1408, 407, 1417, 442); s.rect(READ, 1408, 442, 1450, 456); s.rect(READ, 1408, 509, 1420, 532); s.poly(READ, 1408,542,1420,544,1435,562,1435,574,1408,574);
  s.rect('#a0acdc', 1407, 358, 1410, 387); s.rect('#a0acdc', 1407, 407, 1410, 456); s.rect('#a0acdc', 1407, 509, 1410, 574);
  for (const [x, y, w] of [[-90,192,110],[45,192,40],[120,192,58],[195,192,60],[0,201,30],[75,197,45],[145,201,110],[40,218,100],[-20,222,60],[60,236,130],[-10,240,90],[90,246,60],[110,250,58],[728,192,62],[875,192,60],[1135,192,60],[768,200,58],[480,388,58]]) s.rect(READ, x, y - 1, x + w, y + 2);
  for (const [x, y] of [[2,201],[50,193],[75,197],[52,238],[62,242],[876,193],[1136,193],[170,197],[480,1011],[485,1034],[478,1274],[484,1357]]) for (let k = 0; k < 5; k++) s.raw(pick(BASES), s.X(x) + k * 2, s.Y(y), 2, 2);
  s.rect(o, 33, 192, 37, 202); s.rect(o, 33, 218, 37, 224);
  [[318,192,320,250],[380,192,384,300],[350,300,356,335],[315,340,322,365,330,420],[375,300,390,430],[445,340,447,360],[303,440,303,505],[362,445,370,505],[430,445,435,505],[328,510,326,700,330,830,335,915],[397,510,397,800,402,915],[292,935,295,980],[350,918,356,1000,363,1055],[418,918,425,1050],[308,1060,312,1130],[372,1060,380,1140],[437,1060,441,1130],[296,1160,300,1260],[357,1172,362,1260],[426,1172,428,1250,435,1364],[302,1290,305,1364],[367,1270,367,1364],[335,1150,335,1230],[600,220,610,260],[620,192,630,335]].forEach(n => gap(s, n, {...busy, mis: .17, solid: .85}));
  dots(s, 290, 195, 462, 300, 25);
  s.line([600,450,616,505], (x, y) => { if (rnd() < .6) for (let k = 0; k < 5; k++) s.raw(pick([o, o, b, r]), x + k * 2, y, 2, 2); });
  s.line([592,580,593,680,595,800,602,870,618,930,627,1000,627,1190,637,1280], (x, y) => { if (rnd() < .28) for (let k = 0; k < 5; k++) s.raw(pick(BASES), x + k * 2, y, 2, 2); });
  s.line([635,235,638,335], (x, y) => { if (rnd() < .45) for (let k = 0; k < 4; k++) s.raw(pick([b, b, gr, o]), x + k * 2, y, 2, 2); });
  s.line([645,375,655,420,652,520], (x, y) => { if (rnd() < .25) for (let k = 0; k < 4; k++) s.raw(pick(any), x + k * 2, y, 2, 2); });
  s.rect(b, 632, 216, 656, 223);
  for (const [a, c] of [[192,203],[218,224]]) col(258,a,258,c, gr, r, [gr,b], gr, gr, r, r);
  col(256,233,256,256, r, r, r, gr, gr, r, r); col(260,268,260,276, gr, r, gr, gr, r, r); col(260,425,260,440, r, gr, [b,o], gr, gr, r);
  col(260,563,261,610, [r,b], [r,b,gr], gr, gr, [gr,b], r); col(264,612,265,762, [b,o,gr], b, gr, gr, r); col(269,762,270,835, b, [gr,b,o], gr, gr); col(273,835,273,917, gr, gr, [gr,r]);
  s.line([284,770,286,840,285,880,290,915], (x, y) => { if (rnd() < .6) { s.raw(pick([r, o]), x, y, 4, 2); } });
  for (const [a, c] of [[984,991],[1017,1020],[1057,1061],[1151,1171],[1199,1204],[1218,1223],[1282,1288],[1302,1305],[1331,1338]]) col(271,a,271,c, gr, gr, r);
  for (const [a, c] of [[257,268],[278,281],[302,317],[388,400]]) col(567,a,568,c, gr, [b,r], b, gr, r, gr);
  col(573,317,573,334, gr, r, gr, b); col(574,400,576,440, gr, [gr,r], b, b, [o,b]); col(578,510,579,585, b, [b,gr], [b,gr]); col(585,590,588,642, b, [b,r], o);
  col(483,923,483,962, b); col(483,302,483,334, [b,o]);
  mixed(.85, 1382,192,1390,225, o, [b,o], o, [r,o], o, o); mixed(.85, 1391,232,1398,265, b, o, [b,r], o, [r,o]); col(1403,280,1403,300, [o,b], [r,o]);
  s.rect('#9a8fd4', 697, 1258, 700, 1288); s.rect('#9a8fd4', 697, 1282, 705, 1288);
  L();
  s.rect(r, 1480, 243, 1486, 252); s.rect(r, 1482, 890, 1487, 905); s.rect('#9a8fd4', 1479, 905, 1486, 918); s.rect('#9a8fd4', 1460, 1160, 1482, 1163);
  for (const y of [1283, 1304]) s.rect(r, 1478, y, 1500, y + 2);
  s.rect('#9a8fd4', 735, 425, 739, 440);
  s.flush();
  box(svg, '#808080', 3320, 986, 2, 662);
  label(svg, '[0 - 1179]', 360, 1006, 62, 15, 'Liberation Sans, sans-serif');
}

/* ---------- genes ---------- */
{
  const g = $('genes'), c = '#0000b2';
  frame(g, 1658, 90);
  box(g, '#c8c8d6', 352, 1737, 2968, 2);
  box(g, c, 352, 1674, 158, 16);
  box(g, c, 1448, 1681, 1054, 2);
  box(g, c, 1150, 1674, 240, 16); box(g, c, 2156, 1674, 2, 16); box(g, c, 2502, 1674, 32, 16);
  for (const [a, b] of [[1390,1448],[1494,1566],[1604,1780],[1956,2052],[2106,2156]]) box(g, c, a, 1668, b - a, 28);
  const chev = (x, col, d) => el(g, 'path', {d: `M${x + (d < 0 ? 6 : 0)} 1677l${6 * d} 5l${-6 * d} 5`, fill: 'none', stroke: col, 'stroke-width': 2, 'shape-rendering': 'auto'});
  for (const x of [1478,1596,1810,1870,1930,2082,2188,2248,2308,2368,2428,2488]) chev(x, '#0000ee', -1);
  for (const x of [1554,1664,1724,2015]) chev(x, '#fff', -1);
  for (const x of [383,443]) chev(x, '#fff', 1);
  label(g, 'LOC221946', 371, 1732, 114, 20, 'Liberation Sans, sans-serif');
  label(g, 'ACTB', 1814, 1732, 53, 20, 'Liberation Sans, sans-serif');
}
</script>
</body>
</html>
